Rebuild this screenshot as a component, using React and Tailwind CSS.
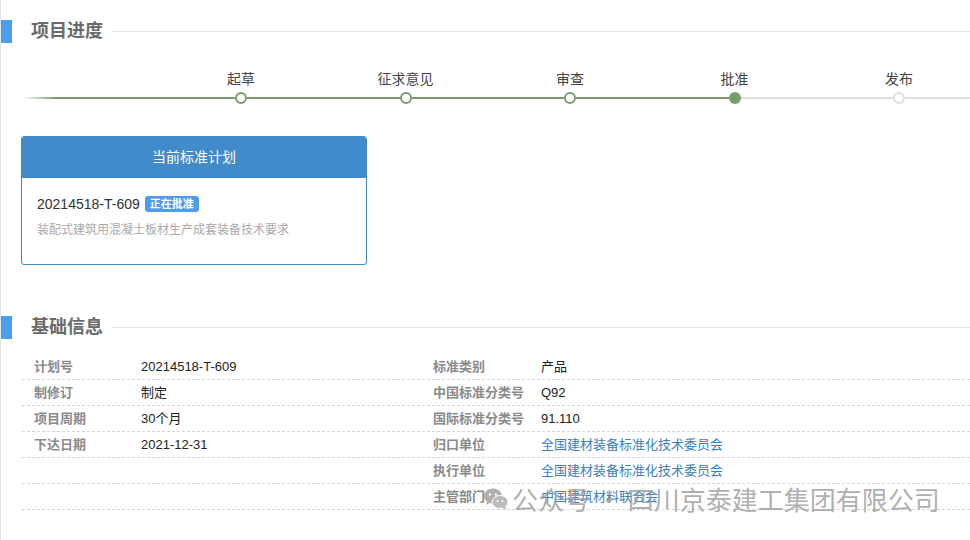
import React from "react";

const steps = [
  { label: "起草", left: "done", right: "done", state: "done" },
  { label: "征求意见", left: "done", right: "done", state: "done" },
  { label: "审查", left: "done", right: "done", state: "done" },
  { label: "批准", left: "done", right: "todo", state: "current" },
  { label: "发布", left: "todo", right: "todo", state: "todo" },
];

const rows = [
  ["计划号", "20214518-T-609", "标准类别", "产品", false],
  ["制修订", "制定", "中国标准分类号", "Q92", false],
  ["项目周期", "30个月", "国际标准分类号", "91.110", false],
  ["下达日期", "2021-12-31", "归口单位", "全国建材装备标准化技术委员会", true],
  ["", "", "执行单位", "全国建材装备标准化技术委员会", true],
  ["", "", "主管部门", "中国建筑材料联合会", true],
];

function SectionTitle({ title }) {
  return (
    <div className="flex items-center h-[23px]">
      <div className="w-[11px] h-full bg-[#4c9cf0]" />
      <h2 className="ml-[19px] text-[18px] leading-[23px] font-bold text-[#6a6a6a]">
        {title}
      </h2>
      <div className="flex-1 ml-[9px] h-px bg-[#e3e3e3]" />
    </div>
  );
}

function Line({ kind }) {
  return (
    <div
      className={
        kind === "done" ? "flex-1 h-[2px] bg-[#7a9c6c]" : "flex-1 h-[2px] bg-[#dedede]"
      }
    />
  );
}

function Dot({ state }) {
  if (state === "current")
    return <div className="w-[12px] h-[12px] rounded-full bg-[#7a9c6c] shrink-0" />;
  if (state === "done")
    return (
      <div className="w-[12px] h-[12px] rounded-full border-2 border-[#7a9c6c] bg-white shrink-0" />
    );
  return (
    <div className="w-[12px] h-[12px] rounded-full border-2 border-[#dedede] bg-white shrink-0" />
  );
}

export default function App() {
  return (
    <div
      className="relative w-[970px] h-[540px] overflow-hidden bg-white border-l border-[#e2e2e2] text-[#333]"
      style={{ fontFamily: '"Liberation Sans", "Noto Sans CJK SC", sans-serif' }}
    >
      <div className="pt-[20px]">
        <SectionTitle title="项目进度" />
      </div>

      {/* progress */}
      <div className="flex mt-[26px] ml-[21px]">
        <div className="w-[136.75px] shrink-0 flex flex-col">
          <div className="h-[23px]" />
          <div className="h-[12px] flex items-center">
            <div className="w-full h-[2px] bg-gradient-to-r from-white from-0% to-[#7a9c6c] to-[25%]" />
          </div>
        </div>
        {steps.map((s) => (
          <div key={s.label} className="w-[164.5px] shrink-0 flex flex-col">
            <div className="h-[23px] text-center text-[14px] leading-[20px] text-[#444]">
              {s.label}
            </div>
            <div className="h-[12px] flex items-center">
              <Line kind={s.left} />
              <Dot state={s.state} />
              <Line kind={s.right} />
            </div>
          </div>
        ))}
      </div>

      {/* current plan card */}
      <div className="mt-[32px] ml-[20px] w-[346px] h-[129px] border border-[#4289c8] rounded-[3px] overflow-hidden">
        <div className="h-[41px] bg-[#428bca] flex items-center justify-center text-white text-[14px]">
          当前标准计划
        </div>
        <div className="pt-[16px] pl-[15px]">
          <div className="flex items-center h-[20px]">
            <span className="text-[14px] text-[#333]">20214518-T-609</span>
            <span className="ml-[5px] px-[5px] h-[16px] leading-[16px] rounded-[3px] bg-[#4f9ced] text-white text-[11px] font-bold">
              正在批准
            </span>
          </div>
          <div className="mt-[7px] text-[12px] leading-[18px] text-[#aaa]">
            装配式建筑用混凝土板材生产成套装备技术要求
          </div>
        </div>
      </div>

      <div className="mt-[51px]">
        <SectionTitle title="基础信息" />
      </div>

      {/* info table */}
      <div className="mt-[15px] ml-[21px]">
        {rows.map((r, i) => (
          <div
            key={i}
            className="grid grid-cols-[107px_292px_108px_1fr] h-[26px] items-center border-b border-dashed border-[#d6d6d6] text-[13px]"
          >
            <div className="pl-[12px] font-bold text-[#8a8a8a]">{r[0]}</div>
            <div className="pl-[12px] text-[#222]">{r[1]}</div>
            <div className="pl-[12px] font-bold text-[#8a8a8a]">{r[2]}</div>
            <div className={r[4] ? "pl-[12px] text-[#3a80c3]" : "pl-[12px] text-[#222]"}>
              {r[3]}
            </div>
          </div>
        ))}
      </div>

      {/* watermark */}
      <div className="absolute left-[482px] top-[484px] flex items-center text-[#9a9a9a]/80 pointer-events-none">
        <svg width="26" height="26" viewBox="0 0 26 26" className="opacity-70">
          <ellipse cx="10" cy="10" rx="9" ry="7.5" fill="#8c8c8c" />
          <path d="M4 15 L3 19 L8 16 Z" fill="#8c8c8c" />
          <ellipse cx="17" cy="16" rx="8" ry="6.5" fill="#a0a0a0" stroke="#fff" strokeWidth="1" />
          <path d="M22 20 L23.5 24 L19 21.5 Z" fill="#a0a0a0" />
          <circle cx="7" cy="8.5" r="1.2" fill="#fff" />
          <circle cx="13" cy="8.5" r="1.2" fill="#fff" />
          <circle cx="14.5" cy="15" r="1" fill="#fff" />
          <circle cx="19.5" cy="15" r="1" fill="#fff" />
        </svg>
        <span
          className="ml-[3px] text-[26px] leading-[30px]"
          style={{ fontFamily: '"Noto Sans CJK SC", sans-serif' }}
        >
          公众号 · 四川京泰建工集团有限公司
        </span>
      </div>
    </div>
  );
}
